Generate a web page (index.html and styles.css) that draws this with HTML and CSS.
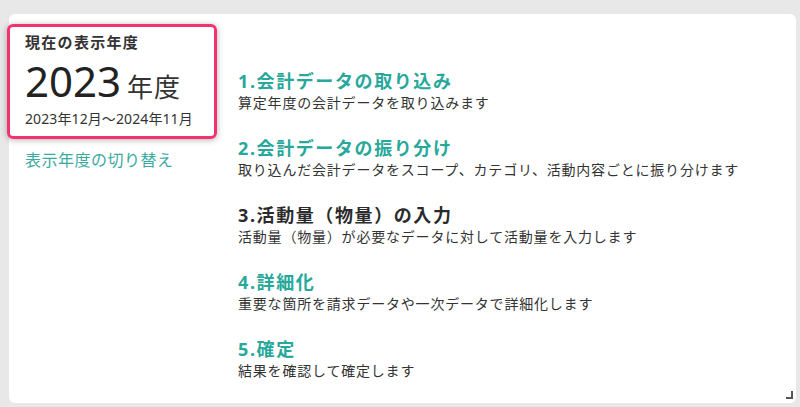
FILE: index.html
```html
<!DOCTYPE html>
<html lang="ja">
<head>
    <meta charset="UTF-8">
    <title>年度の手順</title>
    <link rel="stylesheet" href="styles.css">
</head>
<body>

<div class="card">
    <div class="side">
        <div class="year-box">
            <div class="year-title">現在の表示年度</div>
            <div class="year-main"><span class="year-num">2023</span><span class="year-unit">年度</span></div>
            <div class="year-range">2023年12月～2024年11月</div>
        </div>
        <a class="year-switch" href="#">表示年度の切り替え</a>
    </div>

    <div class="steps">
        <div class="step">
            <div class="step-title">1.会計データの取り込み</div>
            <div class="step-desc">算定年度の会計データを取り込みます</div>
        </div>
        <div class="step">
            <div class="step-title">2.会計データの振り分け</div>
            <div class="step-desc">取り込んだ会計データをスコープ、カテゴリ、活動内容ごとに振り分けます</div>
        </div>
        <div class="step">
            <div class="step-title current">3.活動量（物量）の入力</div>
            <div class="step-desc">活動量（物量）が必要なデータに対して活動量を入力します</div>
        </div>
        <div class="step">
            <div class="step-title">4.詳細化</div>
            <div class="step-desc">重要な箇所を請求データや一次データで詳細化します</div>
        </div>
        <div class="step">
            <div class="step-title">5.確定</div>
            <div class="step-desc">結果を確認して確定します</div>
        </div>
    </div>

    <!-- 右下のリサイズつまみ -->
    <div class="grip"></div>
</div>

</body>
</html>
```

FILE: styles.css
```css
body {
    margin: 0;
    padding: 14px 4px 4px 9px;
    background-color: #e8e8e8;
    font-family: "Noto Sans", "Noto Sans CJK JP", sans-serif;
    color: #333;
}
.card {
    position: relative;
    display: flex;
    width: 787px;
    height: 389px;
    background-color: #fff;
    border-radius: 6px;
}

.side {
    width: 229px;
    flex-shrink: 0;
}
.year-box {
    margin: 10px 0 0 -2px;
    width: 210px;
    box-sizing: border-box;
    padding: 4px 10px 7px 15px;
    border: 3px solid #f2336d;
    border-radius: 6px;
    box-shadow: 0 1px 6px rgba(0, 0, 0, 0.3);
}
.year-title {
    font-size: 15px;
    font-weight: bold;
    line-height: 22px;
    letter-spacing: 1.3px;
}
.year-main {
    height: 56px;
    line-height: 56px;
    white-space: nowrap;
}
.year-num {
    font-size: 42px;
    color: #222;
}
.year-unit {
    font-size: 26px;
    margin-left: 6px;
    letter-spacing: 1px;
}
.year-range {
    font-size: 14px;
    line-height: 20px;
    letter-spacing: 0.1px;
    white-space: nowrap;
}
.year-switch {
    display: block;
    margin: 9px 0 0 16px;
    font-size: 16px;
    line-height: 24px;
    letter-spacing: 0.5px;
    color: #3aaa9f;
    text-decoration: none;
}

.steps {
    padding-top: 55px;
}
.step {
    margin-bottom: 23px;
}
.step-title {
    font-size: 18px;
    font-weight: bold;
    line-height: 24px;
    letter-spacing: 1.6px;
    color: #28a89b;
}
.step-title.current {
    color: #2b2b2b;
}
.step-desc {
    font-size: 14px;
    line-height: 20px;
    letter-spacing: 0.8px;
    white-space: nowrap;
}

.grip {
    position: absolute;
    right: 3px;
    bottom: 4px;
    width: 5px;
    height: 6px;
    border-right: 2px solid #555;
    border-bottom: 2px solid #555;
}
```
